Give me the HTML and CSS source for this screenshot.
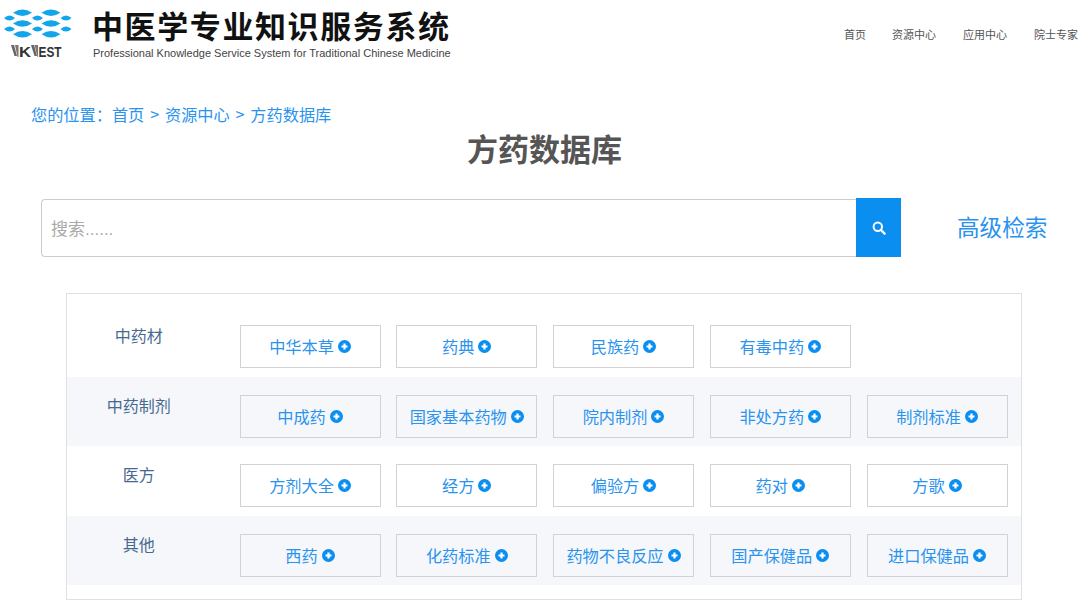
FILE: index.html
```html
<!DOCTYPE html>
<html lang="zh-CN">
<head>
<meta charset="utf-8">
<title>方药数据库</title>
<link rel="stylesheet" href="styles.css">
</head>
<body>
<svg class="defs" width="0" height="0" aria-hidden="true">
  <defs>
    <path id="lens-l" d="M0 0Q9.5 -6.4 19 0Q9.5 6.4 0 0Z"/>
    <path id="lens-s" d="M0 0Q5.5 -5 11 0Q5.5 5 0 0Z"/>
    <g id="plus">
      <circle cx="6.5" cy="6.5" r="6.5" fill="#0a8ef0"/>
      <path d="M3.5 6.5H9.5M6.5 3.5V9.5" stroke="#fff" stroke-width="2.2" fill="none"/>
    </g>
  </defs>
</svg>
<header class="header">
  <div class="brand">
    <svg class="logo" width="72" height="60" viewBox="0 0 72 60">
      <g fill="#12a5ea">
        <use href="#lens-l" x="13" y="12.7"/><use href="#lens-l" x="41.5" y="12.7"/>
        <use href="#lens-s" x="4" y="18"/><use href="#lens-s" x="32" y="18"/><use href="#lens-s" x="60.5" y="18"/>
        <use href="#lens-l" x="13" y="23.5"/><use href="#lens-l" x="41.5" y="23.5"/>
        <use href="#lens-s" x="4" y="29"/><use href="#lens-s" x="32" y="29"/><use href="#lens-s" x="60.5" y="29"/>
        <use href="#lens-l" x="13" y="34.3"/><use href="#lens-l" x="41.5" y="34.3"/>
      </g>
      <polygon points="11,45 14,45 17,56 14.5,56" fill="#666"/>
      <polygon points="15,45 18.5,45 18.5,57 17.5,57" fill="#777"/>
      <polygon points="31,45 34,45 37,56 34.5,56" fill="#666"/>
      <polygon points="34.5,45 38,45 38,57 37.5,57" fill="#777"/>
      <text x="19" y="57" class="logo-k" textLength="12" lengthAdjust="spacingAndGlyphs">K</text>
      <text x="38.5" y="57" class="logo-k" textLength="23" lengthAdjust="spacingAndGlyphs">EST</text>
    </svg>
    <div class="brand-text">
      <div class="brand-title">中医学专业知识服务系统</div>
      <div class="brand-sub">Professional Knowledge Service System for Traditional Chinese Medicine</div>
    </div>
  </div>
  <nav class="nav">
    <a class="nav-first">首页</a><a>资源中心</a><a>应用中心</a><a>院士专家</a>
  </nav>
</header>

<main class="main">
  <div class="crumb">您的位置：首页 &gt; 资源中心 &gt; 方药数据库</div>
  <h1 class="title">方药数据库</h1>

  <div class="search-row">
    <div class="search">
      <div class="search-input">搜索......</div>
      <div class="search-btn">
        <svg width="16" height="16" viewBox="0 0 16 16"><circle cx="6.8" cy="6.8" r="4.2" fill="none" stroke="#fff" stroke-width="2"/><path d="M10 10L13.6 13.6" stroke="#fff" stroke-width="2.4" stroke-linecap="round"/></svg>
      </div>
    </div>
    <a class="advanced">高级检索</a>
  </div>

  <section class="panel">
    <div class="row">
      <div class="label">中药材</div>
      <a class="cell">中华本草<svg class="ic" viewBox="0 0 13 13"><use href="#plus"/></svg></a>
      <a class="cell">药典<svg class="ic" viewBox="0 0 13 13"><use href="#plus"/></svg></a>
      <a class="cell">民族药<svg class="ic" viewBox="0 0 13 13"><use href="#plus"/></svg></a>
      <a class="cell">有毒中药<svg class="ic" viewBox="0 0 13 13"><use href="#plus"/></svg></a>
    </div>
    <div class="row alt">
      <div class="label">中药制剂</div>
      <a class="cell">中成药<svg class="ic" viewBox="0 0 13 13"><use href="#plus"/></svg></a>
      <a class="cell">国家基本药物<svg class="ic" viewBox="0 0 13 13"><use href="#plus"/></svg></a>
      <a class="cell">院内制剂<svg class="ic" viewBox="0 0 13 13"><use href="#plus"/></svg></a>
      <a class="cell">非处方药<svg class="ic" viewBox="0 0 13 13"><use href="#plus"/></svg></a>
      <a class="cell">制剂标准<svg class="ic" viewBox="0 0 13 13"><use href="#plus"/></svg></a>
    </div>
    <div class="row">
      <div class="label">医方</div>
      <a class="cell">方剂大全<svg class="ic" viewBox="0 0 13 13"><use href="#plus"/></svg></a>
      <a class="cell">经方<svg class="ic" viewBox="0 0 13 13"><use href="#plus"/></svg></a>
      <a class="cell">偏验方<svg class="ic" viewBox="0 0 13 13"><use href="#plus"/></svg></a>
      <a class="cell">药对<svg class="ic" viewBox="0 0 13 13"><use href="#plus"/></svg></a>
      <a class="cell">方歌<svg class="ic" viewBox="0 0 13 13"><use href="#plus"/></svg></a>
    </div>
    <div class="row alt">
      <div class="label">其他</div>
      <a class="cell">西药<svg class="ic" viewBox="0 0 13 13"><use href="#plus"/></svg></a>
      <a class="cell">化药标准<svg class="ic" viewBox="0 0 13 13"><use href="#plus"/></svg></a>
      <a class="cell">药物不良反应<svg class="ic" viewBox="0 0 13 13"><use href="#plus"/></svg></a>
      <a class="cell">国产保健品<svg class="ic" viewBox="0 0 13 13"><use href="#plus"/></svg></a>
      <a class="cell">进口保健品<svg class="ic" viewBox="0 0 13 13"><use href="#plus"/></svg></a>
    </div>
  </section>
</main>
</body>
</html>
```
FILE: styles.css
```css
* { box-sizing: border-box; }
html, body { margin: 0; padding: 0; height: 607px; overflow: hidden; background: #fff; }
body { font-family: "Noto Sans CJK SC", "Liberation Sans", sans-serif; color: #555; }
.defs { position: absolute; }

.header { display: flex; justify-content: space-between; height: 70px; }
.brand { display: flex; align-items: flex-start; }
.logo { display: block; flex: none; }
.logo-k { font-family: "Liberation Sans", sans-serif; font-weight: 700; font-size: 15px; fill: #333; }
.brand-text { margin-left: 21px; padding-top: 6px; }
.brand-title { font-size: 31px; line-height: 38px; font-weight: 700; color: #111; letter-spacing: 1.6px; white-space: nowrap; margin-left: -1px; }
.brand-sub { margin-top: 2px; font-family: "Liberation Sans", sans-serif; font-size: 11px; line-height: 14px; color: #444; white-space: nowrap; }

.nav { display: flex; gap: 27px; padding: 26px 2px 0 0; font-size: 11px; line-height: 16px; color: #555; }
.nav-first { margin-right: -1px; }

.crumb { padding: 32px 0 0 31px; font-size: 16.2px; line-height: 24px; color: #2a93ee; word-spacing: 2.2px; }
.title { margin: -1px 0 0; padding-left: 9px; height: 65px; text-align: center; font-size: 31px; line-height: 46px; font-weight: 700; color: #555; }

.search-row { display: flex; align-items: center; padding-left: 41px; height: 59px; margin-top: 8px; }
.search { display: flex; width: 860px; height: 59px; }
.search-input { flex: 1; height: 58px; margin-top: 1px; border: 1px solid #ccc; border-right: 0; border-radius: 4px 0 0 4px; padding-left: 9px; font-family: "Liberation Sans", "Noto Sans CJK SC", sans-serif; font-size: 17px; line-height: 59px; color: #aaa; }
.search-btn { width: 45px; height: 59px; background: #0a8ef0; display: flex; align-items: center; justify-content: center; }
.advanced { margin-left: 56px; margin-top: -2px; font-size: 22.6px; line-height: 32px; color: #2a93ee; white-space: nowrap; }

.panel { margin: 36px 0 0 66px; width: 956px; height: 307px; border: 1px solid #e1e1e1; padding: 13px 0 14px; }
.row { display: grid; grid-template-columns: 156.75px repeat(5, 141px); column-gap: 15.75px; height: 69.5px; padding: 18px 0 8px 0; }
.row.alt { background: #f5f7fa; }
.label { margin-top: -2px; padding-right: 13px; font-size: 16px; line-height: 24px; color: #46698f; text-align: center; }
.cell { display: flex; align-items: center; justify-content: center; height: 43px; padding-bottom: 1px; border: 1px solid #d2d2d2; font-size: 16.2px; line-height: 20px; color: #2a93ee; white-space: nowrap; }
.ic { width: 13px; height: 13px; margin-left: 4px; margin-top: 1px; flex: none; }
```
